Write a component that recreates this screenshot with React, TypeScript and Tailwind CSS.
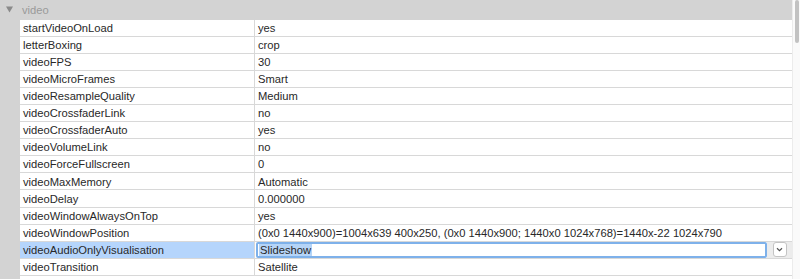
import React from 'react';

const rows: [string, string][] = [
    ['startVideoOnLoad', 'yes'],
    ['letterBoxing', 'crop'],
    ['videoFPS', '30'],
    ['videoMicroFrames', 'Smart'],
    ['videoResampleQuality', 'Medium'],
    ['videoCrossfaderLink', 'no'],
    ['videoCrossfaderAuto', 'yes'],
    ['videoVolumeLink', 'no'],
    ['videoForceFullscreen', '0'],
    ['videoMaxMemory', 'Automatic'],
    ['videoDelay', '0.000000'],
    ['videoWindowAlwaysOnTop', 'yes'],
    ['videoWindowPosition', '(0x0 1440x900)=1004x639 400x250, (0x0 1440x900; 1440x0 1024x768)=1440x-22 1024x790'],
    ['videoAudioOnlyVisualisation', 'Slideshow'],
    ['videoTransition', 'Satellite'],
];

const EDITING = 'videoAudioOnlyVisualisation';

const App: React.FC = () => {
    return (
        <div className="flex w-[800px] h-[279px] overflow-hidden bg-white text-[11.2px] text-[#282828] font-['Liberation_Sans',Arial,sans-serif]">
            <div className="w-[792px] flex flex-col">
                {/* section header */}
                <div className="h-[19.5px] shrink-0 bg-[#d3d3d3] flex items-center">
                    <svg className="ml-[6px] mr-[9px]" width="7" height="7" viewBox="0 0 7 7">
                        <path d="M0 0.5 H7 L3.5 6.5 Z" fill="#8a8a8a" />
                    </svg>
                    <span className="text-[#9a9a9a] pt-[1px]">video</span>
                </div>
                <div className="flex flex-1">
                    <div className="w-[20px] bg-[#d3d3d3]" />
                    <div className="flex-1 flex flex-col">
                        {rows.map(([key, value]) => {
                            const editing = key === EDITING;
                            return (
                                <div key={key} className="h-[17.1px] shrink-0 flex border-b border-[#d8d8d8]">
                                    <div
                                        className={`w-[235px] shrink-0 pl-[3px] pt-[1px] flex items-center border-r border-[#d8d8d8] ${
                                            editing ? 'bg-[#b5d5fc]' : ''
                                        }`}
                                    >
                                        {key}
                                    </div>
                                    {editing ? (
                                        <div className="flex-1 flex items-center">
                                            <div className="w-[511px] h-[16px] ml-[1px] border-2 border-[#7eb1ea] rounded-[2px] bg-white flex items-center pl-[1px] pt-[1px]">
                                                <span className="bg-[#b5d4f7] px-[1px] leading-[12px]">{value}</span>
                                            </div>
                                            <div className="flex-1 h-full bg-[#ececec] flex items-center justify-center">
                                                <div className="w-[14px] h-[15px] bg-white border border-[#c4c4c4] rounded-[3px] flex items-center justify-center">
                                                    <svg width="7" height="5" viewBox="0 0 7 5">
                                                        <path d="M1 1.2 L3.5 3.6 L6 1.2" fill="none" stroke="#555" strokeWidth="1.2" />
                                                    </svg>
                                                </div>
                                            </div>
                                        </div>
                                    ) : (
                                        <div className="flex-1 pl-[3px] pt-[1px] flex items-center whitespace-nowrap overflow-hidden">
                                            {value}
                                        </div>
                                    )}
                                </div>
                            );
                        })}
                    </div>
                </div>
            </div>
            {/* scrollbar */}
            <div className="w-[8px] border-l border-[#ececec] bg-[#fafafa]">
                <div className="ml-[2px] w-[4px] h-[43px] rounded-full bg-[#c2c2c2]" />
            </div>
        </div>
    );
};

export default App;
